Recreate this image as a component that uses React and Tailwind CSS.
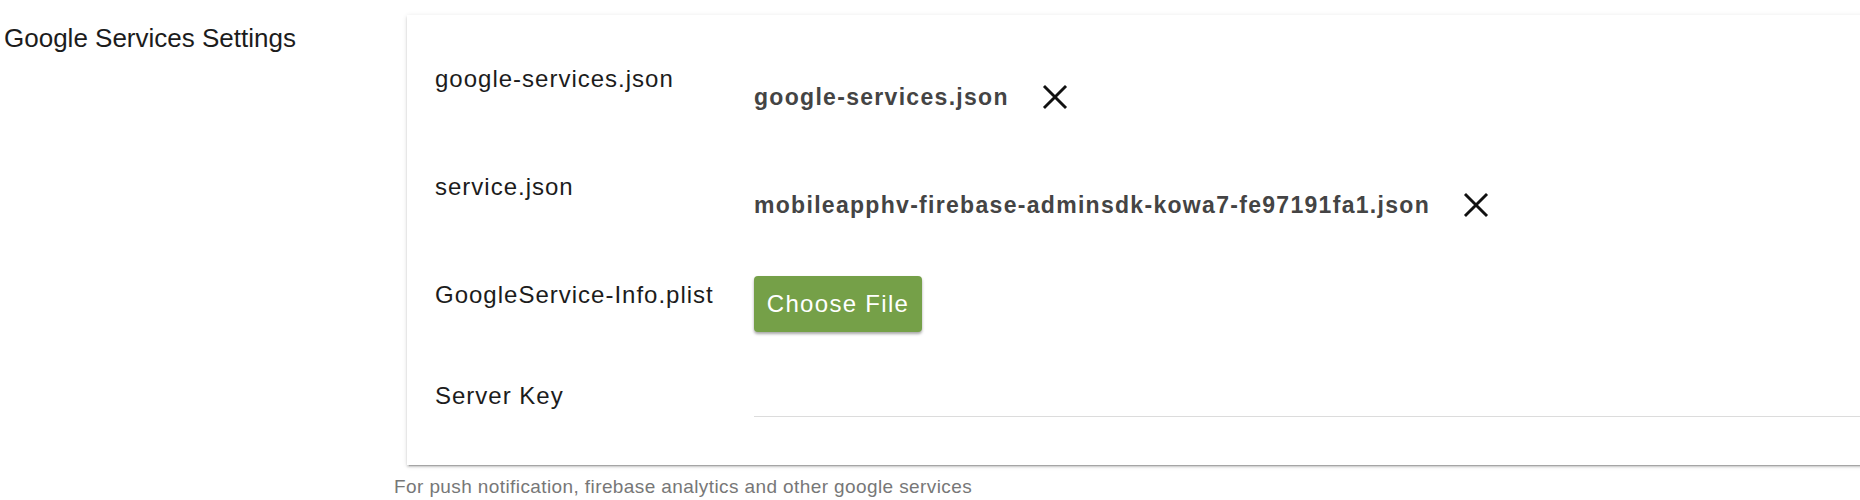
import React from 'react';

const XIcon = () => (
  <svg width="26" height="26" viewBox="0 0 26 26" fill="none" stroke="#111" strokeWidth="2.9" strokeLinecap="square">
    <path d="M3 3 L23 23 M23 3 L3 23" />
  </svg>
);

const FileValue = ({ name }) => (
  <div className="mt-[17px] flex h-[32px] items-center">
    <span className="text-[23px] font-bold leading-[32px] tracking-[1.3px] text-[#444]">{name}</span>
    <button type="button" className="ml-[33px] flex h-[26px] w-[26px] items-center justify-center">
      <XIcon />
    </button>
  </div>
);

export default function App() {
  return (
    <div
      className="flex h-[500px] w-[1860px] overflow-hidden bg-white text-[#1c1c1c]"
      style={{ fontFamily: '"Liberation Sans", Arial, sans-serif' }}
    >
      <div className="w-[394px] shrink-0 pl-[4px] pt-[22px]">
        <h2 className="text-[26px] leading-[32px] font-normal text-[#1c1c1c]">Google Services Settings</h2>
      </div>

      <div className="flex shrink-0 flex-col">
        <div className="ml-[13px] mt-[15px] h-[450px] w-[1500px] bg-white pl-[28px] pt-[49px] shadow-[0_2px_2px_0_rgba(0,0,0,0.14),0_3px_1px_-2px_rgba(0,0,0,0.2),0_1px_5px_0_rgba(0,0,0,0.12)]">
          <div className="flex h-[108px] items-start">
            <div className="w-[319px] shrink-0 text-[24px] leading-[30px] tracking-[1px]">google-services.json</div>
            <FileValue name="google-services.json" />
          </div>

          <div className="flex h-[104px] items-start">
            <div className="w-[319px] shrink-0 text-[24px] leading-[30px] tracking-[1px]">service.json</div>
            <FileValue name="mobileapphv-firebase-adminsdk-kowa7-fe97191fa1.json" />
          </div>

          <div className="flex h-[105px] items-start">
            <div className="mt-[4px] w-[319px] shrink-0 text-[24px] leading-[30px] tracking-[1px]">GoogleService-Info.plist</div>
            <label className="flex h-[56px] w-[168px] cursor-pointer items-center justify-center rounded-[4px] bg-[#75a048] text-[24px] tracking-[1.3px] text-white shadow-[0_2px_3px_rgba(0,0,0,0.35)]">
              Choose File
              <input type="file" className="hidden" />
            </label>
          </div>

          <div className="flex items-start">
            <div className="w-[319px] shrink-0 text-[24px] leading-[30px] tracking-[1px]">Server Key</div>
            <input
              type="text"
              className="h-[36px] flex-1 border-b border-[#dcdcdc] bg-transparent text-[22px] outline-none"
            />
          </div>
        </div>

        <p className="mt-[10px] text-[19px] leading-[24px] tracking-[0.4px] text-[#777]">
          For push notification, firebase analytics and other google services
        </p>
      </div>
    </div>
  );
}
